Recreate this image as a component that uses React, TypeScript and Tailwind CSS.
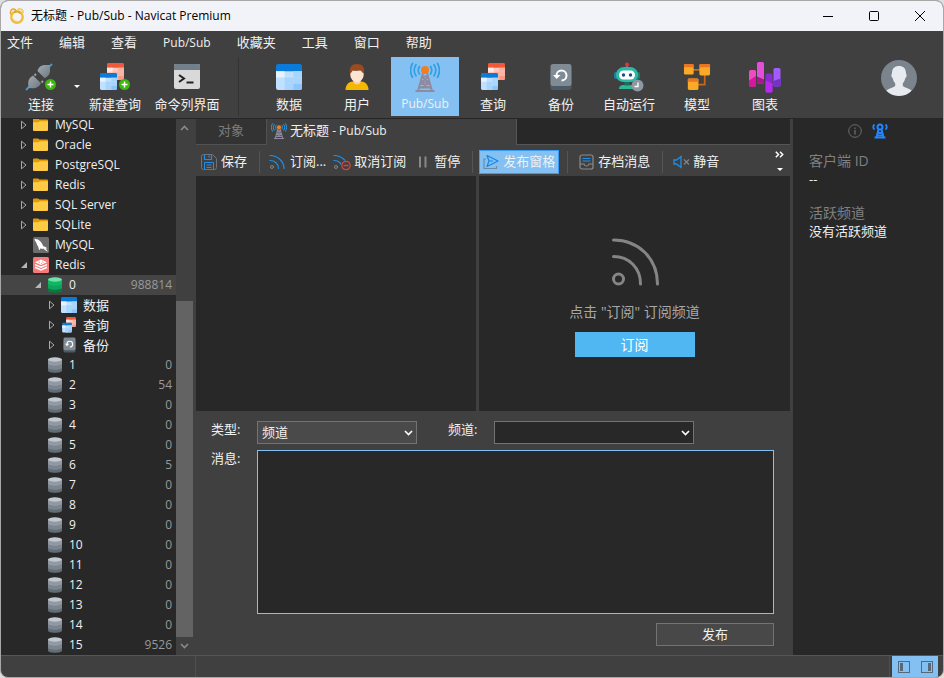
import type { ReactNode } from "react"
import clsx from "clsx"

type IconProps = { className?: string }

/* ---------- icons ---------- */

function LogoIcon() {
  return (
    <svg viewBox="0 0 16 16" className="size-4 shrink-0" fill="none">
      <circle cx="8" cy="9" r="5.700" stroke="#eebd3c" strokeWidth="2.400" />
      <path d="M1.8 6.5C1 3.500 2 1.500 4 1c1.800-.3 3 1 3.200 2.600" stroke="#e2ab2c" strokeWidth="1.500" />
      <path d="M8.500 4C8.300 2 9.500.6 11.300.9c2 .4 3 2.200 2.700 4.100" stroke="#f3cb55" strokeWidth="1.500" />
      <path d="M3.300 8c0 3 2 5 4.700 5" stroke="#f8dc86" strokeWidth="1" />
      <path d="M5 4.600c2-1.200 5-1 6.500 1" stroke="#d99d20" strokeWidth="1.200" />
    </svg>
  )
}

function PlusBadge({ x, y }: { x: number; y: number }) {
  return (
    <g transform={`translate(${x} ${y})`}>
      <circle r="5.500" fill="#3db80a" />
      <path d="M-3 0H3M0-3V3" stroke="#fff" strokeWidth="1.500" />
    </g>
  )
}

function PlugIcon() {
  return (
    <svg viewBox="0 0 32 28" className="h-7 w-8">
      <defs>
        <linearGradient id="plug" x1="0" y1="0" x2="1" y2="1">
          <stop offset="0" stopColor="#a3acb5" />
          <stop offset="1" stopColor="#6d7780" />
        </linearGradient>
      </defs>
      <path d="M1 27l4-4M23 5l4-4" stroke="#4f93bd" strokeWidth="2" />
      <path d="M11 11l-1.500 1.500M18 18l-1.500 1.500" stroke="#9aa3ab" strokeWidth="2" />
      <path d="M12.500 8c1-4 4-6 7.500-6h5v4.500c.5 4-2 7.500-5.500 8.500z" fill="url(#plug)" />
      <path d="M8 12.500l8 7.800c-2 3.700-5 5.300-8.500 5l-4-.3-.3-4.500C3 17 5 14 8 12.500z" fill="url(#plug)" />
      <PlusBadge x={25.5} y={21.5} />
    </svg>
  )
}

function Sheet({ x, y, w, tone }: { x: number; y: number; w: number; tone: "blue" | "red" }) {
  const c =
    tone === "blue"
      ? ["#0a7bd8", "#e6f2fe", "#bfe0fe", "#a9d5fd", "#8cc5fb"]
      : ["#f0583a", "#fde7e1", "#fbc9bd", "#f9b3a3", "#f69a87"]
  const k = w / 18
  return (
    <g transform={`translate(${x} ${y}) scale(${k})`}>
      <path d="M1.500 0h15A1.500 1.500 0 0 1 18 1.500v4H0v-4A1.500 1.500 0 0 1 1.500 0z" fill={c[0]} />
      <path d="M0 5h18v11.500a1.500 1.500 0 0 1-1.500 1.500h-15A1.500 1.500 0 0 1 0 16.500z" fill={c[2]} />
      <path d="M0 5h6v4.300H0z" fill={c[1]} />
      <path d="M6 9.300h6v4.400H6zM12 5h6v4.300h-6z" fill={c[3]} />
      <path d="M12 9.300h6v4.400h-6zM6 13.700h6V18H6z" fill={c[3]} />
      <path d="M12 13.700h6v2.800a1.500 1.500 0 0 1-1.500 1.500H12z" fill={c[4]} />
    </g>
  )
}

function TableIcon({ className }: IconProps) {
  return (
    <svg viewBox="0 0 18 18" className={className}>
      <Sheet x={0} y={0} w={18} tone="blue" />
    </svg>
  )
}

function QueryIcon({ className, plus }: IconProps & { plus?: boolean }) {
  return (
    <svg viewBox={plus ? "0 0 32 28" : "0 0 26 28"} className={className}>
      <Sheet x={8} y={0} w={17} tone="red" />
      <Sheet x={1} y={10} w={17} tone="blue" />
      {plus && <PlusBadge x={25.5} y={21.5} />}
    </svg>
  )
}

function TerminalIcon() {
  return (
    <svg viewBox="0 0 28 28" className="size-7">
      <rect x="1" y="1" width="26" height="25" rx="2" fill="#d9d9d9" />
      <path d="M3 1h22a2 2 0 0 1 2 2v4H1V3a2 2 0 0 1 2-2z" fill="#72808c" />
      <path d="M6 12l5 3.500L6 19" fill="none" stroke="#222" strokeWidth="2" />
      <path d="M13.500 19.500h7" stroke="#222" strokeWidth="2" />
    </svg>
  )
}

function UserIcon() {
  return (
    <svg viewBox="0 0 24 28" className="h-7 w-6">
      <path d="M.5 27c0-5 3-8 7-8.500h9c4 .5 7 3.500 7 8.500z" fill="#f5b800" />
      <path d="M8.500 15h7v4.500c-1.500 2.500-5.500 2.500-7 0z" fill="#f9cdb3" />
      <path d="M5.300 7.500h13.400v3.800c0 4.500-3.200 8-6.700 8s-6.700-3.500-6.700-8z" fill="#fde3d2" />
      <path d="M5 10.500C4 4 7 1 12 1s8 3 7 9.500C17 9.500 16 8 15.500 6.500c-3 1.500-6 1.500-8 .5C7.500 8.500 6.500 9.700 5 10.500z" fill="#9c4a1e" />
    </svg>
  )
}

function AntennaIcon({ className }: IconProps) {
  return (
    <svg viewBox="0 0 30 30" className={className} fill="none">
      <g stroke="#2f9fe6" strokeWidth="1.700" strokeLinecap="round">
        <path d="M9.500 4.500c-1.500 2.200-1.500 5.300 0 7.500M20.500 4.500c1.500 2.200 1.500 5.300 0 7.500" />
        <path d="M6 2.700c-2.200 3.300-2.200 7.800 0 11.100M24 2.700c2.200 3.300 2.200 7.800 0 11.100" />
        <path d="M2.500 1.300c-2.400 4.300-2.400 9.700 0 14M27.500 1.300c2.400 4.300 2.400 9.700 0 14" />
      </g>
      <path
        d="M13 11L8 29M17 11L22 29M12 14.500h6M10.500 20.500h9M9 25.500h12M12.300 15.500l6.700 5M17.700 15.500l-6.700 5M10.500 21l10 5M19.500 21l-10 5"
        stroke="#8c8ba0"
        strokeWidth="1.900"
      />
      <path d="M5.500 29h19" stroke="#8c8ba0" strokeWidth="2" />
      <circle cx="15" cy="8" r="4" fill="#f07f24" />
    </svg>
  )
}

function BackupIcon({ className }: IconProps) {
  return (
    <svg viewBox="0 0 22 28" className={className}>
      <rect x=".5" y="6" width="21" height="21" rx="2.500" fill="#4e5a63" />
      <rect x=".5" y="1" width="21" height="22" rx="2.500" fill="#7f8b95" />
      <path d="M6.500 12.500a5 5 0 1 1 5 5" fill="none" stroke="#fff" strokeWidth="2" />
      <path d="M3 12h7.500L6.700 16z" fill="#fff" />
    </svg>
  )
}

function RobotIcon() {
  return (
    <svg viewBox="0 0 32 30" className="size-8">
      <path d="M14 3v4" stroke="#8c9aa5" strokeWidth="1.500" />
      <circle cx="14" cy="2.500" r="2" fill="#d9363e" />
      <path d="M6 27c0-3 2-4 5-4h6c3 0 4 2 4 4z" fill="#2fb795" />
      <path d="M11.500 19h5v4.500h-5z" fill="#14735f" />
      <rect x="1" y="10" width="4" height="7" rx="2" fill="#1a7fa3" />
      <rect x="23" y="10" width="4" height="7" rx="2" fill="#1a7f6a" />
      <path d="M3 13c0-5 4-8 8-8h6c4 0 8 3 8 8 0 4.500-4 7-8 7h-6c-4 0-8-2.500-8-7z" fill="#2cb9a8" />
      <rect x="6" y="8.500" width="16" height="9" rx="4.500" fill="#fff" />
      <circle cx="10.500" cy="13" r="1.700" fill="#1b4b86" />
      <circle cx="17.500" cy="13" r="1.700" fill="#1b4b86" />
      <circle cx="24.500" cy="23.500" r="6" fill="#8d98a2" />
      <path d="M25 20.500v4h-3.500" fill="none" stroke="#fff" strokeWidth="1.400" />
    </svg>
  )
}

function ModelIcon() {
  const boxes = [
    [1, 1, 10],
    [17, 1, 11],
    [5, 16, 11],
  ]
  return (
    <svg viewBox="0 0 29 29" className="size-7">
      <path d="M10 7h8M22.500 11v11.500H15" fill="none" stroke="#c9671a" strokeWidth="1.800" />
      {boxes.map(([x, y, w]) => (
        <g key={`${x}-${y}`}>
          <rect x={x} y={y} width={w} height={w + 1} rx="1.500" fill="#fbaa27" />
          <path d={`M${x + 1} ${y}h${w - 2}l1 1v2.500h-${w}V${y + 1}z`} fill="#ea7522" />
        </g>
      ))}
    </svg>
  )
}

function ChartIcon() {
  return (
    <svg viewBox="0 0 32 32" className="size-8">
      <rect x="0" y="9" width="7" height="16.500" rx="1.500" fill="#f04bc0" />
      <path d="M0 19.500L7 15v9a1.500 1.500 0 0 1-1.500 1.500h-4A1.500 1.500 0 0 1 0 24z" fill="#d916a0" />
      <rect x="8" y="1" width="7" height="21.500" rx="1.500" fill="#e24fd8" />
      <path d="M8 15.500l7 3V21a1.500 1.500 0 0 1-1.500 1.500h-4A1.500 1.500 0 0 1 8 21z" fill="#a8158c" />
      <rect x="16.500" y="12.500" width="7" height="19" rx="1.500" fill="#8a2bd0" />
      <path d="M16.500 19.500l7 3V30a1.500 1.500 0 0 1-1.500 1.500h-4a1.500 1.500 0 0 1-1.500-1.500z" fill="#b92af0" />
      <rect x="24.500" y="7" width="7" height="18.500" rx="1.500" fill="#a15bff" />
      <path d="M24.500 20l7-2.500V24a1.500 1.500 0 0 1-1.500 1.500h-4a1.500 1.500 0 0 1-1.500-1.500z" fill="#7430c8" />
    </svg>
  )
}

function Avatar() {
  return (
    <svg viewBox="0 0 36 36" className="size-9">
      <circle cx="18" cy="18" r="18" fill="#7b838d" />
      <path
        d="M11 13c0-4.500 2.800-7 7-7s7 2.500 7 7c0 1 .8 1.200.6 2.700-.2 1.600-1 2-1.300 2.300-.4 2.300-1.300 4-2.500 5.200V26c1.500 1.500 6 2 8.800 4.800A18 18 0 0 1 18 36a18 18 0 0 1-12.600-5.200C8.200 28 12.700 27.500 14.200 26v-2.800c-1.200-1.200-2.100-2.900-2.500-5.200-.3-.3-1.100-.7-1.300-2.300-.2-1.500.6-1.700.6-2.700z"
        fill="#e7eaef"
      />
    </svg>
  )
}

function FolderIcon() {
  return (
    <svg viewBox="0 0 16 16" className="size-4">
      <path d="M0 2.500A1 1 0 0 1 1 1.500h4l1.500 1h7.500a1 1 0 0 1 1 1V6H0z" fill="#e39b06" />
      <path d="M0 5.200h5.500l1.200-1H15v8.800a1 1 0 0 1-1 1H1a1 1 0 0 1-1-1z" fill="#fdcb45" />
    </svg>
  )
}

function MysqlIcon() {
  return (
    <svg viewBox="0 0 16 16" className="size-4">
      <rect width="16" height="16" rx="1.500" fill="#6d6d6d" />
      <path
        d="M1.500 2c2-.4 4 .4 5.700 2.200C8.600 5.500 9.500 7.300 10.200 9.200c1.500.4 3.200 1 4.300 2.200l-2 .2 2.500 3c-2-.6-3.400-1.700-4.500-3-1.300.6-2.200.4-2.700-.6-.6.9-.8 1.900-1.300 2.200-.8-1-.9-2.500-1.500-4C3.800 8 3.600 6.200 2.900 5 2.300 4 1.500 3 1.500 2z"
        fill="#fff"
      />
    </svg>
  )
}

function RedisIcon() {
  return (
    <svg viewBox="0 0 16 16" className="size-4">
      <rect width="16" height="16" rx="1.500" fill="#f77a7a" />
      <path d="M8 2.500l6 2.700-6 2.700-6-2.700z" fill="#fff" />
      <path d="M2 7.600l6 2.700 6-2.700M2 10.200l6 2.700 6-2.700" fill="none" stroke="#fff" strokeWidth="1.500" />
      <path d="M5.500 5.200h1.500M9 4.500l1.500 1M8 6.300h1" stroke="#f77a7a" strokeWidth=".8" />
    </svg>
  )
}

function DatabaseIcon({ active }: { active?: boolean }) {
  const c = active ? ["#6fe3a5", "#12b566", "#0fa35a", "#08793f"] : ["#c3c8d0", "#9299a3", "#7b858f", "#626d76"]
  return (
    <svg viewBox="0 0 16 16" className="size-4">
      <path d="M1 10.500v3c0 1.300 3 2.300 7 2.300s7-1 7-2.300v-3z" fill={c[3]} />
      <path d="M1 6.500v4c0 1.300 3 2.200 7 2.200s7-.9 7-2.200v-4z" fill={c[2]} />
      <path d="M1 2.500v4c0 1.300 3 2.200 7 2.200s7-.9 7-2.200v-4z" fill={c[1]} />
      <ellipse cx="8" cy="2.500" rx="7" ry="2.200" fill={c[0]} />
    </svg>
  )
}

function SaveIcon() {
  return (
    <svg viewBox="0 0 16 16" className="size-4" fill="none">
      <path d="M2.500.5h9l4 4v9a2 2 0 0 1-2 2h-11a2 2 0 0 1-2-2v-11a2 2 0 0 1 2-2z" stroke="#6f7377" />
      <path d="M3.500 1v4.500h7V1M8 1.500v2" stroke="#1e8fe8" strokeWidth="1.200" />
      <path d="M3.500 15.500v-7h9v7M5.500 11h5M5.500 13.500h5" stroke="#1e8fe8" />
    </svg>
  )
}

function FeedIcon({ minus }: { minus?: boolean }) {
  return (
    <svg viewBox="0 0 16 16" className="size-4 overflow-visible" fill="none" strokeLinecap="round">
      <path d="M0 1.500C7.500 1.500 14 7 14 14.500" stroke="#1e8fe8" strokeWidth="1.200" />
      <path d="M0 6.500c4.800 0 8.500 3.200 8.500 8" stroke="#1e8fe8" strokeWidth="1.200" />
      <circle cx="2" cy="13" r="1.500" stroke="#858585" />
      {minus && (
        <>
          <circle cx="12" cy="11.500" r="5.200" fill="#404040" />
          <circle cx="12" cy="11.500" r="4.200" stroke="#d8443c" strokeWidth="1.200" />
          <path d="M10 11.500h4" stroke="#d8443c" strokeWidth="1.400" />
        </>
      )}
    </svg>
  )
}

function PauseIcon() {
  return (
    <svg viewBox="0 0 16 16" className="size-4">
      <path d="M6 2.500v11M11.500 2.500v11" stroke="#888" strokeWidth="2" />
    </svg>
  )
}

function SendIcon() {
  return (
    <svg viewBox="0 0 16 16" className="size-4" fill="none">
      <path d="M3 5H1v9.500h12.500V12" stroke="#6f8aa3" strokeWidth="1.200" />
      <path d="M4 1.500L15 7 4 12.500 6 7zM6 7h4" stroke="#1585e8" strokeWidth="1.200" strokeLinejoin="round" />
    </svg>
  )
}

function ArchiveIcon() {
  return (
    <svg viewBox="0 0 16 16" className="size-4" fill="none">
      <rect x="2" y="1" width="13" height="14" rx="2" stroke="#8b8b8b" strokeWidth="1.200" />
      <path d="M4.500 4.500h8M4.500 7h8" stroke="#1e8fe8" strokeWidth="1.200" />
      <path d="M2 10h4c.3 1.500 1 2 2.500 2s2.200-.5 2.500-2h4" stroke="#8b8b8b" strokeWidth="1.200" />
    </svg>
  )
}

function MuteIcon() {
  return (
    <svg viewBox="0 0 16 16" className="size-4 overflow-visible" fill="none">
      <path d="M8 2.500v11L3.500 10H1V6h2.500z" stroke="#1e8fe8" strokeWidth="1.300" />
      <path d="M11 5.500l5 5M16 5.500l-5 5" stroke="#858585" strokeWidth="1.200" />
    </svg>
  )
}

function RadioTowerIcon() {
  return (
    <svg viewBox="0 0 16 16" className="size-4" fill="none" stroke="#1f86ff">
      <path d="M2.500 1.500C.8 3 .8 5 2.500 6.500M13.500 1.500c1.700 1.500 1.700 3.500 0 5" strokeWidth="1.800" />
      <circle cx="8" cy="4" r="2.500" strokeWidth="2" />
      <path d="M6.500 6.500L4.500 14.500M9.500 6.500l2 8M5.500 10h5M5 12.500h6" strokeWidth="2" />
      <path d="M2.500 14.500h11" strokeWidth="1.800" />
    </svg>
  )
}

function Chevron({ className, up }: IconProps & { up?: boolean }) {
  return (
    <svg viewBox="0 0 9 6" className={clsx("h-1.5 w-[9px]", className)} fill="none">
      <path d={up ? "M1 5l3.500-3.500L8 5" : "M1 1l3.500 3.500L8 1"} stroke="currentColor" strokeWidth="1.600" />
    </svg>
  )
}

function Caret() {
  return (
    <svg viewBox="0 0 6 3" className="h-[3px] w-1.5">
      <path d="M0 0h6L3 3z" fill="#fff" />
    </svg>
  )
}

function PanelIcon({ right }: { right?: boolean }) {
  return (
    <svg viewBox="0 0 12 12" className="size-3">
      <rect x=".5" y=".5" width="11" height="11" fill="none" stroke="#56697c" />
      <path d={right ? "M7 2h3v8H7z" : "M2 2h3v8H2z"} fill="#56697c" />
    </svg>
  )
}

/* ---------- window parts ---------- */

function TitleBar() {
  return (
    <header className="flex h-[30px] shrink-0 items-center bg-[#f1f3f9] pl-2 text-black">
      <LogoIcon />
      <h1 className="ml-1.5 flex-1 text-xs">无标题 - Pub/Sub - Navicat Premium</h1>
      <button aria-label="最小化" className="flex h-full w-[46px] items-center justify-center">
        <svg viewBox="0 0 10 10" className="size-2.5">
          <path d="M0 5.500h10" stroke="#000" />
        </svg>
      </button>
      <button aria-label="最大化" className="flex h-full w-[46px] items-center justify-center">
        <svg viewBox="0 0 10 10" className="size-2.5">
          <rect x=".5" y=".5" width="9" height="9" rx="1" fill="none" stroke="#000" />
        </svg>
      </button>
      <button aria-label="关闭" className="flex h-full w-[46px] items-center justify-center">
        <svg viewBox="0 0 10 10" className="size-2.5">
          <path d="M0 0l10 10M10 0L0 10" stroke="#000" />
        </svg>
      </button>
    </header>
  )
}

const MENU = ["文件", "编辑", "查看", "Pub/Sub", "收藏夹", "工具", "窗口", "帮助"]

function MenuBar() {
  return (
    <nav className="flex h-[26px] shrink-0 items-center gap-[26px] pb-0.5 pl-1.5">
      {MENU.map((label) => (
        <button key={label} className={label === "Pub/Sub" ? "text-xs" : "text-[13px]"}>
          {label}
        </button>
      ))}
    </nav>
  )
}

function ToolButton({ icon, label, className }: { icon: ReactNode; label: string; className?: string }) {
  return (
    <button className={clsx("flex h-[59px] flex-col items-center pt-1", className ?? "w-[68px]")}>
      <span className="flex h-8 items-center">{icon}</span>
      <span className={clsx("mt-px leading-5 whitespace-nowrap", label === "Pub/Sub" ? "text-xs" : "text-[13px]")}>
        {label}
      </span>
    </button>
  )
}

function Toolbar() {
  return (
    <div className="flex h-[62px] shrink-0 items-start border-b border-[#262626] pr-[26px]">
      <ToolButton icon={<PlugIcon />} label="连接" className="ml-1 w-[72px]" />
      <button aria-label="连接选项" className="-ml-1 flex h-[59px] w-2 items-center justify-center">
        <Caret />
      </button>
      <ToolButton icon={<QueryIcon className="h-7 w-8" plus />} label="新建查询" className="w-[68px]" />
      <ToolButton icon={<TerminalIcon />} label="命令列界面" className="w-[76px]" />
      <div className="mr-4 ml-[13px] h-[59px] w-px bg-[#333]" />
      <ToolButton icon={<TableIcon className="size-[26px]" />} label="数据" />
      <ToolButton icon={<UserIcon />} label="用户" />
      <ToolButton icon={<AntennaIcon className="size-[30px]" />} label="Pub/Sub" className="w-[68px] bg-[#84c1f2]" />
      <ToolButton icon={<QueryIcon className="h-7 w-[26px]" />} label="查询" />
      <ToolButton icon={<BackupIcon className="h-7 w-[22px]" />} label="备份" />
      <ToolButton icon={<RobotIcon />} label="自动运行" />
      <ToolButton icon={<ModelIcon />} label="模型" />
      <ToolButton icon={<ChartIcon />} label="图表" />
      <button aria-label="账户" className="mt-[3px] ml-auto">
        <Avatar />
      </button>
    </div>
  )
}

type Node = {
  label: string
  icon: ReactNode
  level: 0 | 1 | 2
  state?: "open" | "closed"
  count?: number
  selected?: boolean
}

const FOLDERS = ["MySQL", "Oracle", "PostgreSQL", "Redis", "SQL Server", "SQLite"]
const COUNTS = [0, 54, 0, 0, 0, 5, 0, 0, 0, 0, 0, 0, 0, 0, 9526]

const NODES: Node[] = [
  ...FOLDERS.map((label): Node => ({ label, icon: <FolderIcon />, level: 0, state: "closed" })),
  { label: "MySQL", icon: <MysqlIcon />, level: 0 },
  { label: "Redis", icon: <RedisIcon />, level: 0, state: "open" },
  { label: "0", icon: <DatabaseIcon active />, level: 1, state: "open", count: 988814, selected: true },
  { label: "数据", icon: <TableIcon className="size-4" />, level: 2, state: "closed" },
  { label: "查询", icon: <QueryIcon className="size-4" />, level: 2, state: "closed" },
  { label: "备份", icon: <BackupIcon className="h-4 w-[13px]" />, level: 2, state: "closed" },
  ...COUNTS.map((count, i): Node => ({ label: String(i + 1), icon: <DatabaseIcon />, level: 1, count })),
]

const INDENT = ["pl-4", "pl-[30px]", "pl-11"]

function TreeRow({ node }: { node: Node }) {
  return (
    <li
      className={clsx(
        "flex h-5 shrink-0 items-center pr-1 text-xs leading-3",
        INDENT[node.level],
        node.selected && "bg-[#454545]",
      )}
    >
      <span className="flex w-4 shrink-0 justify-center pr-0.5">
        {node.state === "closed" && (
          <svg viewBox="0 0 6 10" className="h-2.5 w-1.5">
            <path d="M.5 1.200v7.600L5 5z" fill="none" stroke="#aaa" />
          </svg>
        )}
        {node.state === "open" && (
          <svg viewBox="0 0 6 6" className="size-1.5">
            <path d="M6 0v6H0z" fill="#b5b5b5" />
          </svg>
        )}
      </span>
      <span className="flex w-4 shrink-0 justify-center">{node.icon}</span>
      <span className={clsx("ml-1.5 flex-1", node.level === 2 && "text-[13px]")}>{node.label}</span>
      {node.count !== undefined && <span className="text-[#999]">{node.count}</span>}
    </li>
  )
}

function Sidebar() {
  return (
    <aside className="flex w-[195px] shrink-0">
      <ul className="flex min-w-0 flex-1 flex-col justify-end overflow-hidden bg-[#282828]">
        {NODES.map((node, i) => (
          <TreeRow key={i} node={node} />
        ))}
      </ul>
      <div className="flex w-5 flex-col pr-[3px] text-[#8a8a8a]">
        <Chevron up className="mx-auto mt-1.5 shrink-0" />
        <div className="min-h-0 flex-[170]" />
        <div className="min-h-0 flex-[337] bg-[#636363]" />
        <Chevron className="mx-auto my-1.5 shrink-0" />
      </div>
    </aside>
  )
}

function Tabs() {
  return (
    <div className="flex h-[26px] shrink-0" role="tablist">
      <button role="tab" className="w-[71px] border-r border-b border-[#525252] bg-[#333] pb-0.5 text-[13px] text-[#7d7d7d]">
        对象
      </button>
      <button
        role="tab"
        aria-selected
        className="flex w-[250px] items-center gap-[3px] border-r border-[#555] pb-0.5 pl-1 text-[13px]"
      >
        <AntennaIcon className="size-4 shrink-0" />
        <span className="whitespace-nowrap">
          无标题<span className="text-xs"> - Pub/Sub</span>
        </span>
      </button>
      <div className="flex-1 border-b border-[#555] bg-[#282828]" />
    </div>
  )
}

function Action({ icon, label, active }: { icon: ReactNode; label: string; active?: boolean }) {
  return (
    <button
      className={clsx(
        "flex h-6 shrink-0 items-center gap-1 px-1 text-[13px] whitespace-nowrap",
        active && "bg-[#84c1f2] outline -outline-offset-1 outline-[#3b9bf5]",
      )}
    >
      {icon}
      {label}
    </button>
  )
}

function Separator() {
  return <div className="mr-1.5 ml-2 h-[22px] w-px shrink-0 bg-[#555]" />
}

function ActionBar() {
  return (
    <div className="flex h-[31px] shrink-0 items-center pt-0.5 pr-1.5 pl-px">
      <Action icon={<SaveIcon />} label="保存" />
      <Separator />
      <Action icon={<FeedIcon />} label="订阅..." />
      <Action icon={<FeedIcon minus />} label="取消订阅" />
      <Action icon={<PauseIcon />} label="暂停" />
      <Separator />
      <Action icon={<SendIcon />} label="发布窗格" active />
      <Separator />
      <Action icon={<ArchiveIcon />} label="存档消息" />
      <Separator />
      <Action icon={<MuteIcon />} label="静音" />
      <button aria-label="更多" className="ml-auto flex flex-col items-center gap-2.5 pb-0.5">
        <svg viewBox="0 0 9 7" className="h-[7px] w-[9px]" fill="none" stroke="#fff" strokeWidth="1.500">
          <path d="M.8.8l2.700 2.700L.8 6.200M5 .8l2.700 2.700L5 6.200" />
        </svg>
        <Caret />
      </button>
    </div>
  )
}

function EmptyState() {
  return (
    <section className="flex min-w-0 flex-1 flex-col items-center justify-center bg-[#282828] pt-2 text-sm">
      <svg viewBox="0 0 48 48" className="size-12" fill="none" stroke="#858585" strokeWidth="3" strokeLinecap="round">
        <circle cx="7.500" cy="41" r="5" />
        <path d="M2.500 18.500C18 18.500 29.500 30 29.500 46" />
        <path d="M2.500 2C27 2 46.500 20 46.500 46" />
      </svg>
      <p className="mt-4 leading-5 text-[#a8a8a8]">点击 "订阅" 订阅频道</p>
      <button className="mt-2.5 h-[25px] w-[120px] bg-[#50b7f2] text-white">订阅</button>
    </section>
  )
}

function PublishForm() {
  return (
    <form className="grid shrink-0 grid-cols-[46px_1fr] gap-y-1.5 pt-2.5 pr-4 pb-[9px] pl-[15px] text-[13px]">
      <label htmlFor="type" className="leading-4">
        类型:
      </label>
      <div className="flex">
        <div className="relative w-40">
          <select id="type" className="h-[23px] w-full appearance-none border border-[#737373] bg-[#4a4a4a] pl-1">
            <option>频道</option>
            <option>模式</option>
          </select>
          <Chevron className="pointer-events-none absolute top-[9px] right-1 text-white" />
        </div>
        <label htmlFor="channel" className="ml-[31px] w-[46px] leading-4">
          频道:
        </label>
        <div className="relative w-[200px]">
          <input id="channel" className="h-[23px] w-full border border-[#737373] bg-[#282828] px-1 align-top" />
          <Chevron className="pointer-events-none absolute top-[9px] right-1 text-white" />
        </div>
      </div>
      <label htmlFor="message" className="leading-4">
        消息:
      </label>
      <textarea id="message" className="block h-41 w-full resize-none border border-[#84c1f2] bg-[#282828] p-1" />
      <button
        type="button"
        className="col-start-2 mt-[3px] h-[23px] w-[118px] justify-self-end border border-[#737373] bg-[#484848]"
      >
        发布
      </button>
    </form>
  )
}

function InfoPanel() {
  return (
    <aside className="w-[150px] shrink-0 bg-[#282828] px-4 pt-1">
      <div className="flex items-center justify-end gap-2.5 pr-[39px]">
        <button aria-label="信息">
          <svg viewBox="0 0 14 14" className="size-3.5" fill="none" stroke="#6b6b6b">
            <circle cx="7" cy="7" r="6.300" />
            <path d="M7 6v4.500M7 3.500V5" strokeWidth="1.300" />
          </svg>
        </button>
        <button aria-label="Pub/Sub">
          <RadioTowerIcon />
        </button>
      </div>
      <dl>
        <dt className="mt-3 text-sm leading-[19px] text-[#808080]">客户端 ID</dt>
        <dd className="text-[13px] leading-[18px]">--</dd>
        <dt className="mt-[15px] text-sm leading-[19px] text-[#808080]">活跃频道</dt>
        <dd className="text-[13px] leading-[18px]">没有活跃频道</dd>
      </dl>
    </aside>
  )
}

function StatusBar() {
  return (
    <footer className="flex h-[22px] shrink-0 border-t border-[#555] pr-[5px]">
      <div className="w-[195px] shrink-0 border-r border-[#4f4f4f]" />
      <div className="mr-0.5 flex-1 border-r border-[#4f4f4f]" />
      <div className="flex w-[46px] items-center justify-around bg-[#84c1f2]">
        <button aria-label="显示导航窗格">
          <PanelIcon />
        </button>
        <button aria-label="显示信息窗格">
          <PanelIcon right />
        </button>
      </div>
    </footer>
  )
}

export default function App() {
  return (
    <div className="h-screen bg-[#dedede] font-['Open_Sans','Noto_Sans_CJK_SC',sans-serif] text-[#f0f0f0]">
      <div className="flex h-full flex-col overflow-hidden rounded-lg border border-[#a8a8a8] bg-[#404040]">
        <TitleBar />
        <MenuBar />
        <Toolbar />
        <div className="flex min-h-0 flex-1">
          <Sidebar />
          <main className="flex min-w-0 flex-1 flex-col pr-[3px]">
            <Tabs />
            <ActionBar />
            <div className="flex min-h-0 flex-1 gap-[3px]">
              <section className="w-[280px] shrink-0 bg-[#282828]" />
              <EmptyState />
            </div>
            <PublishForm />
          </main>
          <InfoPanel />
        </div>
        <StatusBar />
      </div>
    </div>
  )
}
